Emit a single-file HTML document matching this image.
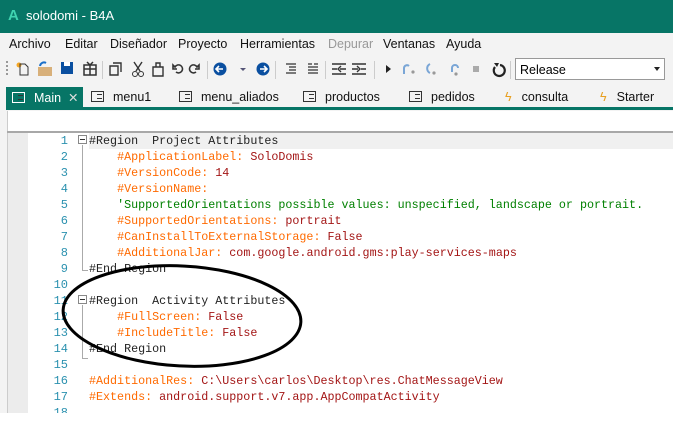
<!DOCTYPE html>
<html><head><meta charset="utf-8"><style>
*{margin:0;padding:0;box-sizing:border-box}
body{width:673px;height:424px;overflow:hidden;background:#fff;font-family:"Liberation Sans",sans-serif;position:relative}
.a{position:absolute}
#title{left:0;top:0;width:673px;height:33px;background:#077566;color:#fff;font-size:13px}
#menu{left:0;top:33px;width:673px;height:22px;background:#f3f3f3;font-size:12.5px;color:#111}
#menu span{position:absolute;top:4px}
#tb{left:0;top:55px;width:673px;height:30px;background:#f3f3f3}
#tabs{left:0;top:85px;width:673px;height:26px;background:#f3f3f3;font-size:12.5px;color:#111}
.tab{position:absolute;top:5px}
.ic{display:inline-block;width:13px;height:11px;border:1.5px solid #333;vertical-align:-1px;margin-right:9px;position:relative}
.ic:after{content:"";position:absolute;left:5px;top:2px;width:5px;height:1px;border-top:1px solid #333;border-bottom:1px solid #333;height:3px}
.code{font-family:"Liberation Mono",monospace;font-size:11.7px;white-space:pre;line-height:16px}
.ln{position:absolute;left:30px;width:38px;text-align:right;color:#2b91af;font-family:"Liberation Mono",monospace;font-size:12px;line-height:16px}
.o{color:#ff6a00}.r{color:#a31515}.g{color:#008000}.k{color:#222}
.sep{position:absolute;top:6px;width:1px;height:18px;background:#ccc}
</style></head><body>
<div id="title" class="a"><span class="a" style="left:8px;top:7px;color:#3fd3b0;font-weight:bold;font-size:15px">A</span><span class="a" style="left:26px;top:8px">solodomi - B4A</span></div>
<div id="menu" class="a">
<span style="left:9px">Archivo</span><span style="left:65px">Editar</span><span style="left:110px">Diseñador</span><span style="left:178px">Proyecto</span><span style="left:240px">Herramientas</span><span style="left:328px;color:#999">Depurar</span><span style="left:383px">Ventanas</span><span style="left:446px">Ayuda</span>
</div>
<div id="tb" class="a">
<svg class="a" style="left:0;top:0" width="520" height="30">
<g fill="#999"><rect x="6" y="6" width="2" height="2"/><rect x="6" y="10" width="2" height="2"/><rect x="6" y="14" width="2" height="2"/><rect x="6" y="18" width="2" height="2"/></g>
<circle cx="19" cy="10" r="2.5" fill="#f5a623"/><path d="M20 9h5l3 3v8h-8z" fill="none" stroke="#333"/>
<rect x="38" y="12" width="14" height="9" fill="#d8b07a"/><path d="M40 11a4 4 0 0 1 6-3" stroke="#1a6fc9" stroke-width="2" fill="none"/>
<rect x="61" y="7" width="12" height="12" fill="#0a4fa0"/><rect x="64" y="7" width="6" height="4" fill="#fff"/>
<path d="M84 10h12v10h-12zM90 10v10M84 14h12M87 7l3 3 3-3" fill="none" stroke="#333" stroke-width="1.5"/>
<rect x="102" y="6" width="1" height="18" fill="#ccc"/>
<path d="M110 11h8v9h-8zM113 8h8v9" fill="none" stroke="#333" stroke-width="1.4"/>
<path d="M134 7l6 9M142 7l-6 9" stroke="#333" stroke-width="1.4"/><circle cx="135" cy="19" r="2.5" fill="none" stroke="#333"/><circle cx="141" cy="19" r="2.5" fill="none" stroke="#333"/>
<path d="M153 12h10v9h-10zM156 12v-4h4v4" fill="none" stroke="#333" stroke-width="1.4"/>
<path d="M176 17a4 4 0 1 0 -1 -5l-2 -2v4h4" fill="none" stroke="#333" stroke-width="1.6"/>
<path d="M196 17a4 4 0 1 1 1 -5l2 -2v4h-4" fill="none" stroke="#333" stroke-width="1.6"/>
<rect x="207" y="6" width="1" height="18" fill="#ccc"/>
<circle cx="220" cy="14" r="6.5" fill="#0a4fa0"/><path d="M223 14h-6M219 11l-3 3 3 3" stroke="#fff" stroke-width="1.6" fill="none"/>
<path d="M240 13l3 3 3-3z" fill="#557"/>
<circle cx="263" cy="14" r="6.5" fill="#0a4fa0"/><path d="M260 14h6M264 11l3 3-3 3" stroke="#fff" stroke-width="1.6" fill="none"/>
<rect x="275" y="6" width="1" height="18" fill="#ccc"/>
<path d="M286 9h10M289 12h7M289 15h7M286 18h10" stroke="#333" stroke-width="1.2"/>
<path d="M308 9h4M314 9h4M308 12h10M308 15h10M308 18h10" stroke="#333" stroke-width="1.2"/>
<rect x="325" y="6" width="1" height="18" fill="#ccc"/>
<path d="M332 9h14M332 14h5M340 14h6M332 19h14M341 11l-3 3 3 3" stroke="#333" stroke-width="1.4" fill="none"/>
<path d="M352 9h14M352 14h6M361 14h5M352 19h14M357 11l3 3-3 3" stroke="#333" stroke-width="1.4" fill="none"/>
<rect x="374" y="6" width="1" height="18" fill="#ccc"/>
<path d="M386 10l5 4-5 4z" fill="#222"/>
<path d="M404 19v-6a3 3 0 0 1 5-2" stroke="#7aa6d6" stroke-width="2" fill="none"/><circle cx="413" cy="17" r="1.6" fill="#999"/>
<path d="M430 9a5 5 0 0 0 0 9" stroke="#7aa6d6" stroke-width="2" fill="none"/><circle cx="434" cy="18" r="1.6" fill="#999"/>
<path d="M452 17v-4a3 3 0 0 1 6 0" stroke="#7aa6d6" stroke-width="2" fill="none"/><circle cx="456" cy="19" r="1.6" fill="#999"/>
<rect x="473" y="11" width="6" height="6" fill="#aaa"/>
<path d="M500 10a5.5 5.5 0 1 1 -5 2" stroke="#222" stroke-width="2.2" fill="none"/><path d="M494 8l5 0-2 4z" fill="#222"/>
<rect x="510" y="6" width="1" height="18" fill="#ccc"/>
</svg>
<div class="a" style="left:515px;top:3px;width:150px;height:22px;border:1px solid #999;background:#fff;font-size:12.5px;padding:4px 4px">Release<span class="a" style="right:4px;top:8px;border-left:3px solid transparent;border-right:3px solid transparent;border-top:4px solid #222"></span></div>
</div>
<div id="tabs" class="a">
<div class="a" style="left:6px;top:2px;width:77px;height:22px;background:#077566"></div>
<div class="tab" style="left:12px;color:#fff"><span class="ic" style="border-color:#fff"></span>Main&nbsp;&nbsp;<span style="color:#ddd">✕</span></div>
<div class="tab" style="left:91px"><span class="ic"></span>menu1</div>
<div class="tab" style="left:179px"><span class="ic"></span>menu_aliados</div>
<div class="tab" style="left:303px"><span class="ic"></span>productos</div>
<div class="tab" style="left:409px"><span class="ic"></span>pedidos</div>
<div class="tab" style="left:505px"><span style="color:#e8a020;margin-right:10px">ϟ</span>consulta</div>
<div class="tab" style="left:600px"><span style="color:#e8a020;margin-right:10px">ϟ</span>Starter</div>
<div class="a" style="left:6px;top:22px;width:667px;height:3px;background:#077566"></div>
</div>
<div class="a" style="left:0;top:111px;width:673px;height:313px;background:#f3f3f3"></div>
<div class="a" style="left:7px;top:111px;width:666px;height:21px;background:#fff;border-left:1px solid #ccc"></div>
<div class="a" style="left:7px;top:131px;width:666px;height:2px;background:#a8a8a8"></div>
<div class="a" style="left:7px;top:133px;width:21px;height:280px;background:#ececec;border-left:1px solid #ccc"></div>
<div class="a" style="left:28px;top:133px;width:645px;height:280px;background:#fff"></div>
<div class="a" style="left:89px;top:133px;width:584px;height:16px;background:#f0f0f0"></div>
<div class="ln" style="top:133px">1<br>2<br>3<br>4<br>5<br>6<br>7<br>8<br>9<br>10<br>11<br>12<br>13<br>14<br>15<br>16<br>17<br>18</div>
<div class="a" style="left:78px;top:135px;width:9px;height:9px;border:1px solid #888;background:#fff"></div><div class="a" style="left:80px;top:139px;width:5px;height:1px;background:#333"></div>
<div class="a" style="left:82px;top:145px;width:1px;height:126px;background:#aaa"></div><div class="a" style="left:82px;top:270px;width:6px;height:1px;background:#aaa"></div>
<div class="a" style="left:78px;top:295px;width:9px;height:9px;border:1px solid #888;background:#fff"></div><div class="a" style="left:80px;top:299px;width:5px;height:1px;background:#333"></div>
<div class="a" style="left:82px;top:305px;width:1px;height:54px;background:#aaa"></div><div class="a" style="left:82px;top:358px;width:6px;height:1px;background:#aaa"></div>
<div class="a code k" style="left:89px;top:133px">#Region  Project Attributes
    <span class="o">#ApplicationLabel:</span> <span class="r">SoloDomis</span>
    <span class="o">#VersionCode:</span> <span class="r">14</span>
    <span class="o">#VersionName:</span>
    <span class="g">'SupportedOrientations possible values: unspecified, landscape or portrait.</span>
    <span class="o">#SupportedOrientations:</span> <span class="r">portrait</span>
    <span class="o">#CanInstallToExternalStorage:</span> <span class="r">False</span>
    <span class="o">#AdditionalJar:</span> <span class="r">com.google.android.gms:play-services-maps</span>
#End Region

#Region  Activity Attributes
    <span class="o">#FullScreen:</span> <span class="r">False</span>
    <span class="o">#IncludeTitle:</span> <span class="r">False</span>
#End Region

<span class="o">#AdditionalRes:</span> <span class="r">C:\Users\carlos\Desktop\res.ChatMessageView</span>
<span class="o">#Extends:</span> <span class="r">android.support.v7.app.AppCompatActivity</span>
</div>
<div class="a" style="left:0;top:413px;width:673px;height:11px;background:#fff"></div>
<svg class="a" style="left:0;top:0" width="673" height="424"><ellipse cx="182" cy="316" rx="119" ry="50" transform="rotate(3 182 316)" fill="none" stroke="#000" stroke-width="3"/></svg>
</body></html>
